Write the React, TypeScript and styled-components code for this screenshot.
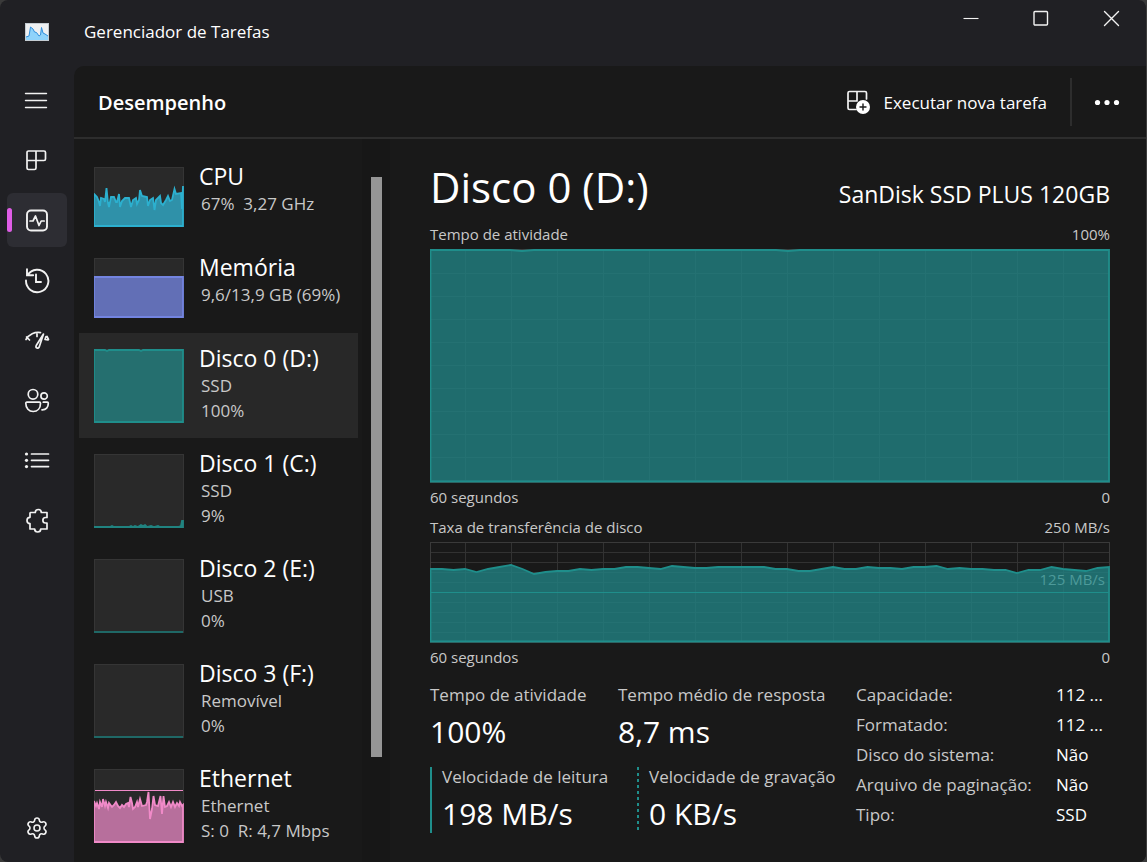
import React from "react";
import styled, { createGlobalStyle, css } from "styled-components";
import { Settings } from "lucide-react";

const color = {
  chrome: "#202024",
  surface: "#191919",
  hover: "#2d2d33",
  selected: "#282828",
  line: "#2d2d2d",
  text: "#ffffff",
  muted: "#c8c8c8",
  accent: "#df5de6",
};

const GlobalStyle = createGlobalStyle`
  *, *::before, *::after { box-sizing: border-box; }
  body {
    margin: 0;
    background: #3a3a3a;
    color: ${color.text};
    font-family: "Open Sans", "Noto Sans", sans-serif;
    font-size: 17px;
  }
  button {
    font: inherit;
    color: inherit;
    background: none;
    border: 0;
    padding: 0;
  }
  h1, h2, p, ul, dl, dd { margin: 0; padding: 0; }
  svg { display: block; }
`;

const Window = styled.div`
  display: flex;
  flex-direction: column;
  min-height: 100vh;
  background: ${color.chrome};
  border-right: 1px solid #3d3d3d;
  border-radius: 8px;
  overflow: hidden;
`;

const TitleBar = styled.header`
  display: flex;
  align-items: flex-start;
  height: 66px;
`;

const Brand = styled.div`
  display: flex;
  flex: 1;
  align-items: center;
  gap: 35px;
  height: 63px;
  padding-left: 25px;
`;

const AppTitle = styled.h1`
  font-size: 17px;
  font-weight: 400;
`;

const WindowButton = styled.button`
  display: grid;
  place-items: center;
  width: 70px;
  height: 36px;
`;

const Body = styled.div`
  display: flex;
  flex: 1;
`;

const Rail = styled.nav`
  display: flex;
  flex-direction: column;
  gap: 6px;
  width: 74px;
  padding: 7px;
`;

const RailButton = styled.button<{ $active?: boolean; $last?: boolean }>`
  position: relative;
  display: grid;
  place-items: center;
  width: 60px;
  height: 54px;
  border-radius: 6px;
  background: ${(p) => (p.$active ? color.hover : "transparent")};
  ${(p) => p.$last && css`margin-top: auto;`}
  ${(p) =>
    p.$active &&
    css`
      &::before {
        content: "";
        position: absolute;
        left: 0;
        top: 15px;
        width: 5px;
        height: 24px;
        border-radius: 3px;
        background: ${color.accent};
      }
    `}
`;

const Surface = styled.main`
  display: flex;
  flex: 1;
  flex-direction: column;
  min-width: 0;
  background: ${color.surface};
  border-top-left-radius: 10px;
`;

const PageHeader = styled.div`
  display: flex;
  align-items: center;
  height: 73px;
  padding: 1px 4px 0 24px;
  border-bottom: 2px solid ${color.line};
`;

const PageTitle = styled.h2`
  flex: 1;
  font-size: 20px;
  font-weight: 600;
`;

const RunTask = styled.button`
  display: flex;
  align-items: center;
  gap: 10px;
  margin-right: 23px;
`;

const Divider = styled.div`
  width: 2px;
  height: 48px;
  background: ${color.line};
`;

const MoreButton = styled.button`
  display: grid;
  place-items: center;
  width: 70px;
  height: 48px;
`;

const Columns = styled.div`
  display: flex;
  flex: 1;
`;

const ResourceList = styled.ul`
  width: 284px;
  padding: 12px 0 4px 5px;
  list-style: none;
`;

const Resource = styled.button<{ $active?: boolean }>`
  display: flex;
  gap: 15px;
  width: 100%;
  padding: 16px 0 15px 15px;
  text-align: left;
  background: ${(p) => (p.$active ? color.selected : "transparent")};
`;

const Thumb = styled.svg`
  flex: none;
  width: 90px;
  background: #292929;
`;

const ResourceText = styled.span`
  display: flex;
  flex-direction: column;
  height: 60px;
  margin-top: -6px;
  white-space: nowrap;
`;

const ResourceName = styled.span`
  font-size: 23px;
  line-height: 30px;
`;

const ResourceInfo = styled.span`
  padding-left: 2px;
  color: ${color.muted};
  font-size: 17px;
  line-height: 25px;
`;

const ScrollTrack = styled.div`
  display: flex;
  justify-content: center;
  width: 28px;
  margin-left: 4px;
  padding-top: 38px;
  background: #171717;
`;

const ScrollThumb = styled.div`
  width: 11px;
  height: 580px;
  background: #959595;
`;

const Detail = styled.section`
  flex: 1;
  min-width: 0;
  padding: 0 36px 0 40px;
`;

const DetailHead = styled.div`
  display: flex;
  align-items: baseline;
  justify-content: space-between;
  height: 84px;
  padding-top: 19px;
`;

const DetailTitle = styled.h2`
  font-size: 42px;
  font-weight: 400;
  line-height: 58px;
`;

const Model = styled.p`
  font-size: 23px;
`;

const Caption = styled.div`
  display: flex;
  justify-content: space-between;
  color: ${color.muted};
  font-size: 15px;
  line-height: 22px;
  padding-bottom: 4px;
`;

const Axis = styled(Caption)`
  padding: 3px 0 8px;
`;

const ChartFrame = styled.div`
  position: relative;
`;

const ChartSvg = styled.svg`
  width: 100%;
`;

const ScaleLabel = styled.span`
  position: absolute;
  right: 5px;
  top: 26px;
  color: #4d9a9a;
  font-size: 15px;
  line-height: 22px;
`;

const Summary = styled.div`
  display: flex;
  justify-content: space-between;
  margin-top: 4px;
`;

const Stats = styled.div`
  display: flex;
  flex-direction: column;
  gap: 16px;
  padding-top: 5px;
`;

const StatRow = styled.div`
  display: flex;
`;

const Stat = styled.div<{ $width?: number; $bar?: "solid" | "dashed" }>`
  width: ${(p) => (p.$width ? `${p.$width}px` : "auto")};
  white-space: nowrap;
  ${(p) =>
    p.$bar &&
    css`
      padding-left: 12px;
      background: ${p.$bar === "solid"
        ? "linear-gradient(#1f8e8b, #1f8e8b)"
        : "repeating-linear-gradient(#1f8e8b 0 3px, transparent 3px 6px)"}
        left / 2px 100% no-repeat;
    `}
`;

const StatLabel = styled.p`
  color: ${color.muted};
  line-height: 20px;
`;

const StatValue = styled.p`
  margin-top: 8px;
  font-size: 30px;
  line-height: 38px;
`;

const Facts = styled.dl`
  display: grid;
  grid-template-columns: 200px 54px;
  align-content: start;
  line-height: 30px;
  white-space: nowrap;

  dt { color: ${color.muted}; }
`;

const Icon = ({ children, size = 28 }: { children: React.ReactNode; size?: number }) => (
  <svg
    width={size}
    height={size}
    viewBox={`0 0 ${size} ${size}`}
    fill="none"
    stroke="#f2f2f2"
    strokeWidth="1.7"
    strokeLinecap="round"
    strokeLinejoin="round"
    aria-hidden="true"
  >
    {children}
  </svg>
);

const railItems = [
  { label: "Abrir navegação", icon: <path d="M2.5 7.500h21M2.5 14.500h21M2.5 21.500h21" strokeWidth="1.4" /> },
  {
    label: "Processos",
    icon: <path d="M5.5 5H21a1.5 1.5 0 0 1 1.500 1.500V13a1.500 1.500 0 0 1-1.500 1.500H13V22a1.500 1.500 0 0 1-1.500 1.500h-6A1.500 1.500 0 0 1 4 22V6.500A1.500 1.500 0 0 1 5.500 5zM13 5v9.500M4 14.500h9" />,
  },
  {
    label: "Desempenho",
    active: true,
    icon: (
      <>
        <rect x="4" y="4.500" width="20" height="20" rx="4" strokeWidth="1.9" />
        <path d="M7 15h3L12.500 10l3.500 9.500 2.200-4.500h3" />
      </>
    ),
  },
  {
    label: "Histórico de aplicativos",
    icon: <path d="M3 14.500A11.200 11.200 0 1 0 4.600 9.200M4 3.300v5.900h6.200M13 8.500v7.500h5" strokeWidth="1.9" strokeLinejoin="miter" />,
  },
  {
    label: "Aplicativos de inicialização",
    icon: (
      <>
        <path d="M3 13.500A14 14 0 0 1 17.500 6.600M24 10.500l1.500 3M3.500 11l3 3M14 7v3.500M25 14l-3-.5 1-3" />
        <path d="M20.500 8l-7.300 11.500c-1 2.500 1.800 3.500 3 1.500z" />
      </>
    ),
  },
  {
    label: "Usuários",
    icon: (
      <path d="M14.800 8.300a4.800 4.800 0 1 1-9.600 0 4.800 4.800 0 0 1 9.600 0zM24.300 10a3.200 3.200 0 1 1-6.400 0 3.200 3.200 0 0 1 6.400 0zM4 16.200h12.500a1 1 0 0 1 1 1c0 5-3 8.300-7.300 8.300S2.800 22.200 2.800 17.200a1 1 0 0 1 1.200-1zM20.300 16.200h4a1 1 0 0 1 1 1c0 4-2.300 6.800-6.300 6.600" />
    ),
  },
  {
    label: "Detalhes",
    icon: (
      <>
        <path d="M8.500 8h17M8.500 14.300h17M8.500 20.600h17" strokeWidth="1.700" />
        <g fill="#f2f2f2" stroke="none">
          <circle cx="3.500" cy="8" r="1.600" />
          <circle cx="3.500" cy="14.300" r="1.600" />
          <circle cx="3.500" cy="20.600" r="1.600" />
        </g>
      </>
    ),
  },
  {
    label: "Serviços",
    icon: <path d="M7.500 6.500h4.800c0-4 6-4 6 0h5.700v5h-1.500c-3.500 0-3.500 5.500 0 5.500H24v6h-6.300c0 4-6 4-6 0H7v-5.500c-4-.2-4-6 0-6.200V7z" />,
  },
];

type Point = [number, number];

/* Turns flat "x y x y" samples into a list of points. */
const parse = (samples: string): Point[] =>
  (samples.match(/\S+ \S+/g) ?? []).map((pair) => pair.split(" ").map(Number) as Point);

const toPath = (points: Point[]) => points.map(([x, y]) => `${x},${y}`).join(" L");

interface ResourceItem {
  name: string;
  info: string[];
  height: number;
  stroke: string;
  fill: string;
  samples: string;
  active?: boolean;
  marker?: number;
}

const idle = { height: 74, stroke: "#1f6866", fill: "#256f6f" };

const resources: ResourceItem[] = [
  {
    name: "CPU",
    info: ["67%\u00a0 3,27 GHz"],
    height: 60,
    stroke: "#2cb0cf",
    fill: "#2f91a9",
    samples:
      "0 27 3 30 5 35 6 39 7 31 10 32 11 35 12.500 21 14 36 15 40 17 30 20 30 22 35 23 35 25 27 26 40 28 34 31 31 35 31 37 40 39 33 42 31 43 37 45 33 46 23 48 29 53 30 54 39 56 33 59 31 60.500 43 62 33 66 29 67 36 69 38 72 33 74 29 76 34 78 33 80.500 22 82 27 87 26 88 42 89 19",
  },
  { name: "Memória", info: ["9,6/13,9 GB (69%)"], height: 60, stroke: "#7384e0", fill: "#626fb6", samples: "0 19 89 19" },
  { name: "Disco 0 (D:)", info: ["SSD", "100%"], height: 74, stroke: "#1f8e8b", fill: "#256f6f", samples: "0 1 11 1 13 2 15 1 45 1 47 2 49 1 89 1", active: true },
  { name: "Disco 1 (C:)", info: ["SSD", "9%"], ...idle, stroke: "#208380", samples: "0 73 16 73 18 72 20 73 35 73 37 72 39 73 41 72 44 73 47 71 49 72 51 71 53 73 57 72 60 73 64 72 66 73 84 73 87 72 88 67 89 67" },
  { name: "Disco 2 (E:)", info: ["USB", "0%"], ...idle, samples: "0 73 89 73" },
  { name: "Disco 3 (F:)", info: ["Removível", "0%"], ...idle, samples: "0 73 89 73" },
  {
    name: "Ethernet",
    info: ["Ethernet", "S: 0\u00a0 R: 4,7 Mbps"],
    height: 74,
    stroke: "#f08ac8",
    fill: "#b76f9c",
    marker: 21.5,
    samples:
      "0 32 2 37 3 34 5 40 6 33 8 38 9 30 11 37 12 33 14 39 15 34 18 38 20 36 22 33 24 37 26 39 28 36 30 38 32 35 34 34 35 38 36.500 28 38 34 39 40 41 38 43 33 44 38 46 30 48 37 52 36 53 33 54.500 23 56 50 58 40 59.500 27 61 36 64 37 66.500 27 68 45 69.500 27 71 38 73 37 75 33 77 38 79 33 81 38 83 34 85 37 86 33 88 37 89 36",
  },
];

const Sparkline = ({ item }: { item: ResourceItem }) => (
  <Thumb height={item.height} viewBox={`0 0 90 ${item.height}`} aria-hidden="true">
    <rect x="0.500" y="0.500" width="89" height={item.height - 1} fill="none" stroke="#353535" />
    <path
      d={`M${toPath(parse(item.samples))} L89,${item.height - 1} L0,${item.height - 1} Z`}
      fill={item.fill}
      stroke={item.stroke}
      strokeWidth="1.800"
    />
    {item.marker && <path d={`M1 ${item.marker}H89`} stroke={item.stroke} />}
  </Thumb>
);

const range = (start: number, end: number, step: number) =>
  Array.from({ length: Math.ceil((end - start) / step) }, (_, i) => start + i * step);

interface ChartProps {
  label: string;
  height: number;
  rowStart: number;
  rowStep: number;
  points: Point[];
  midline?: number;
}

const Chart = ({ label, height, rowStart, rowStep, points, midline }: ChartProps) => (
  <ChartSvg height={height} viewBox={`0 0 680 ${height}`} preserveAspectRatio="none" role="img" aria-label={label}>
    <path
      d={
        range(35.5, 680, 46).map((x) => `M${x} 0V${height}`).join("") +
        range(rowStart, height, rowStep).map((y) => `M0 ${y}H679`).join("")
      }
      stroke="#323232"
    />
    <rect x="0.500" y="0.500" width="679" height={height - 1} fill="none" stroke="#3a3a3a" />
    <path
      d={`M${toPath(points)} L679,${height - 1.5} L0.5,${height - 1.5} Z`}
      fill="#208182"
      fillOpacity="0.800"
      stroke="#1f8e8b"
      strokeWidth="1.800"
    />
    {midline && <path d={`M0 ${midline}H679`} stroke="#1f8e8b" />}
  </ChartSvg>
);

const activePoints = parse("0.5 1 80 1 92 2 104 1 346 1 358 2 370 1 679 1");

const transferLevels = [
  27, 27, 28, 27, 30, 27, 25, 23, 27, 32, 30, 29, 29, 27, 28, 27, 27, 25, 25, 26, 27, 24, 25, 26, 26, 25, 25, 25, 25,
  25, 27, 27, 29, 29, 27, 25, 27, 27, 25, 26, 26, 27, 25, 25, 24, 27, 26, 27, 27, 28, 28, 31, 28, 28, 25, 27, 28, 29,
  26, 25,
];
const transferPoints = transferLevels.map((y, i): Point => [0.5 + i * 11.5, y]);

const facts = [
  ["Capacidade:", "112 ..."],
  ["Formatado:", "112 ..."],
  ["Disco do sistema:", "Não"],
  ["Arquivo de paginação:", "Não"],
  ["Tipo:", "SSD"],
];

const AppLogo = () => (
  <svg width="24" height="18" viewBox="0 0 24 18" aria-hidden="true">
    <rect x="0.500" y="0.500" width="23" height="17" fill="#eef0f2" stroke="#c4ccd2" />
    <path d="M1 14l3-1 1.500-9L8 6l1.500 3 2 .5L14 13l1.500-1L16.500 4.500l1.500 5.500 2 1 3 2v4H1z" fill="#8fd3fb" />
    <path d="M1 14l3-1 1.500-9L8 6l1.500 3 2 .5L14 13l1.500-1L16.500 4.500l1.500 5.500 2 1 3 2" fill="none" stroke="#2f8fdc" />
  </svg>
);

export default function App() {
  return (
    <>
      <GlobalStyle />
      <Window>
        <TitleBar>
          <Brand>
            <AppLogo />
            <AppTitle>Gerenciador de Tarefas</AppTitle>
          </Brand>
          <WindowButton aria-label="Minimizar">
            <Icon size={18}><path d="M1.500 9.500h15" strokeWidth="1.100" strokeLinecap="butt" /></Icon>
          </WindowButton>
          <WindowButton aria-label="Maximizar">
            <Icon size={18}><rect x="2" y="2.500" width="13.500" height="13.500" rx="1" strokeWidth="1.400" /></Icon>
          </WindowButton>
          <WindowButton aria-label="Fechar">
            <Icon size={18}><path d="M2.500 2.500l14 14M16.500 2.500l-14 14" strokeWidth="1.400" /></Icon>
          </WindowButton>
        </TitleBar>
        <Body>
          <Rail aria-label="Navegação">
            {railItems.map((item) => (
              <RailButton key={item.label} aria-label={item.label} $active={item.active}>
                <Icon>{item.icon}</Icon>
              </RailButton>
            ))}
            <RailButton aria-label="Configurações" $last>
              <Settings size={24} strokeWidth={1.6} color="#f2f2f2" />
            </RailButton>
          </Rail>
          <Surface>
            <PageHeader>
              <PageTitle>Desempenho</PageTitle>
              <RunTask>
                <Icon>
                  <path d="M11 21.500H4.500A1.500 1.500 0 0 1 3 20V5a1.500 1.500 0 0 1 1.500-1.500h15.500A1.500 1.500 0 0 1 21.500 5v6M12 3.500v9.500H3" />
                  <circle cx="18" cy="19" r="7" fill="#ffffff" stroke="none" />
                  <path d="M18 16v6M15 19h6" stroke="#191919" strokeWidth="1.400" />
                </Icon>
                Executar nova tarefa
              </RunTask>
              <Divider />
              <MoreButton aria-label="Mais opções">
                <Icon>
                  <g fill="#ffffff" stroke="none">
                    <circle cx="4.500" cy="14.500" r="2.600" />
                    <circle cx="14" cy="14.500" r="2.600" />
                    <circle cx="23.500" cy="14.500" r="2.600" />
                  </g>
                </Icon>
              </MoreButton>
            </PageHeader>
            <Columns>
              <ResourceList>
                {resources.map((item) => (
                  <li key={item.name}>
                    <Resource $active={item.active}>
                      <Sparkline item={item} />
                      <ResourceText>
                        <ResourceName>{item.name}</ResourceName>
                        {item.info.map((line) => (
                          <ResourceInfo key={line}>{line}</ResourceInfo>
                        ))}
                      </ResourceText>
                    </Resource>
                  </li>
                ))}
              </ResourceList>
              <ScrollTrack aria-hidden="true">
                <ScrollThumb />
              </ScrollTrack>
              <Detail>
                <DetailHead>
                  <DetailTitle>Disco 0 (D:)</DetailTitle>
                  <Model>SanDisk SSD PLUS 120GB</Model>
                </DetailHead>
                <Caption><span>Tempo de atividade</span><span>100%</span></Caption>
                <ChartFrame>
                  <Chart label="Tempo de atividade" height={234} rowStart={24.5} rowStep={23} points={activePoints} />
                </ChartFrame>
                <Axis><span>60 segundos</span><span>0</span></Axis>
                <Caption><span>Taxa de transferência de disco</span><span>250 MB/s</span></Caption>
                <ChartFrame>
                  <Chart label="Taxa de transferência de disco" height={101} rowStart={10.5} rowStep={10} points={transferPoints} midline={50.5} />
                  <ScaleLabel>125 MB/s</ScaleLabel>
                </ChartFrame>
                <Axis><span>60 segundos</span><span>0</span></Axis>
                <Summary>
                  <Stats>
                    <StatRow>
                      <Stat $width={188}><StatLabel>Tempo de atividade</StatLabel><StatValue>100%</StatValue></Stat>
                      <Stat><StatLabel>Tempo médio de resposta</StatLabel><StatValue>8,7 ms</StatValue></Stat>
                    </StatRow>
                    <StatRow>
                      <Stat $width={207} $bar="solid"><StatLabel>Velocidade de leitura</StatLabel><StatValue>198 MB/s</StatValue></Stat>
                      <Stat $bar="dashed"><StatLabel>Velocidade de gravação</StatLabel><StatValue>0 KB/s</StatValue></Stat>
                    </StatRow>
                  </Stats>
                  <Facts>
                    {facts.map(([name, value]) => (
                      <React.Fragment key={name}>
                        <dt>{name}</dt>
                        <dd>{value}</dd>
                      </React.Fragment>
                    ))}
                  </Facts>
                </Summary>
              </Detail>
            </Columns>
          </Surface>
        </Body>
      </Window>
    </>
  );
}
